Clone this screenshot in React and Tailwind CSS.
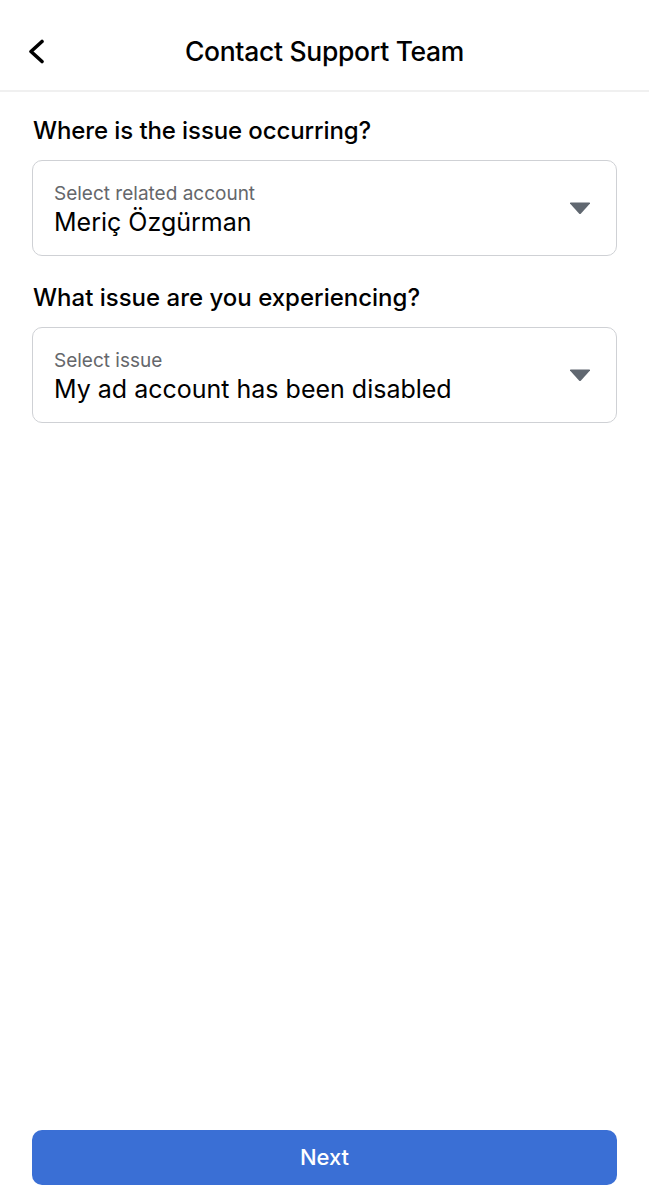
export default function App() {
  const font = { fontFamily: 'Inter, "Noto Sans", sans-serif' };
  const Caret = () => (
    <svg width="22" height="13" viewBox="0 0 22 13" className="shrink-0">
      <path d="M1 1.5 Q0.5 0.5 2 0.5 L20 0.5 Q21.5 0.5 21 1.5 L12 11.5 Q11 12.5 10 11.5 Z" fill="#606770" />
    </svg>
  );
  const Select = ({ label, value }) => (
    <div className="mx-[32px] h-[96px] rounded-[10px] border border-[#cfd1d5] flex items-center pl-[21px] pr-[25px]">
      <div className="flex-1 flex flex-col pt-[4px]">
        <span className="text-[19px] leading-[24px] text-[#65676b]">{label}</span>
        <span className="text-[25px] leading-[32px] text-black">{value}</span>
      </div>
      <Caret />
    </div>
  );
  return (
    <div style={font} className="w-[649px] h-[1200px] bg-white flex flex-col">
      <div className="h-[92px] border-b-2 border-[#f0f0f0] relative flex items-center justify-center pt-[14px]">
        <svg className="absolute left-[27px] top-[39px]" width="20" height="25" viewBox="0 0 20 25">
          <path d="M15 2.5 L4 12.5 L15 22.5" stroke="#000" strokeWidth="3.6" fill="none" strokeLinecap="round" strokeLinejoin="round" />
        </svg>
        <span className="text-[26.5px] font-medium text-black tracking-[-0.3px]">Contact Support Team</span>
      </div>
      <div className="px-[33px] pt-[24px] pb-[14px] text-[24px] leading-[30px] text-black font-medium tracking-[-0.1px]">Where is the issue occurring?</div>
      <Select label="Select related account" value="Meriç Özgürman" />
      <div className="px-[33px] pt-[27px] pb-[14px] text-[24px] leading-[30px] text-black font-medium tracking-[0px]">What issue are you experiencing?</div>
      <Select label="Select issue" value="My ad account has been disabled" />
      <div className="flex-1" />
      <div className="mx-[32px] mb-[15px] h-[55px] rounded-[10px] bg-[#3a6fd5] flex items-center justify-center">
        <span className="text-white text-[22px] font-medium">Next</span>
      </div>
    </div>
  );
}
